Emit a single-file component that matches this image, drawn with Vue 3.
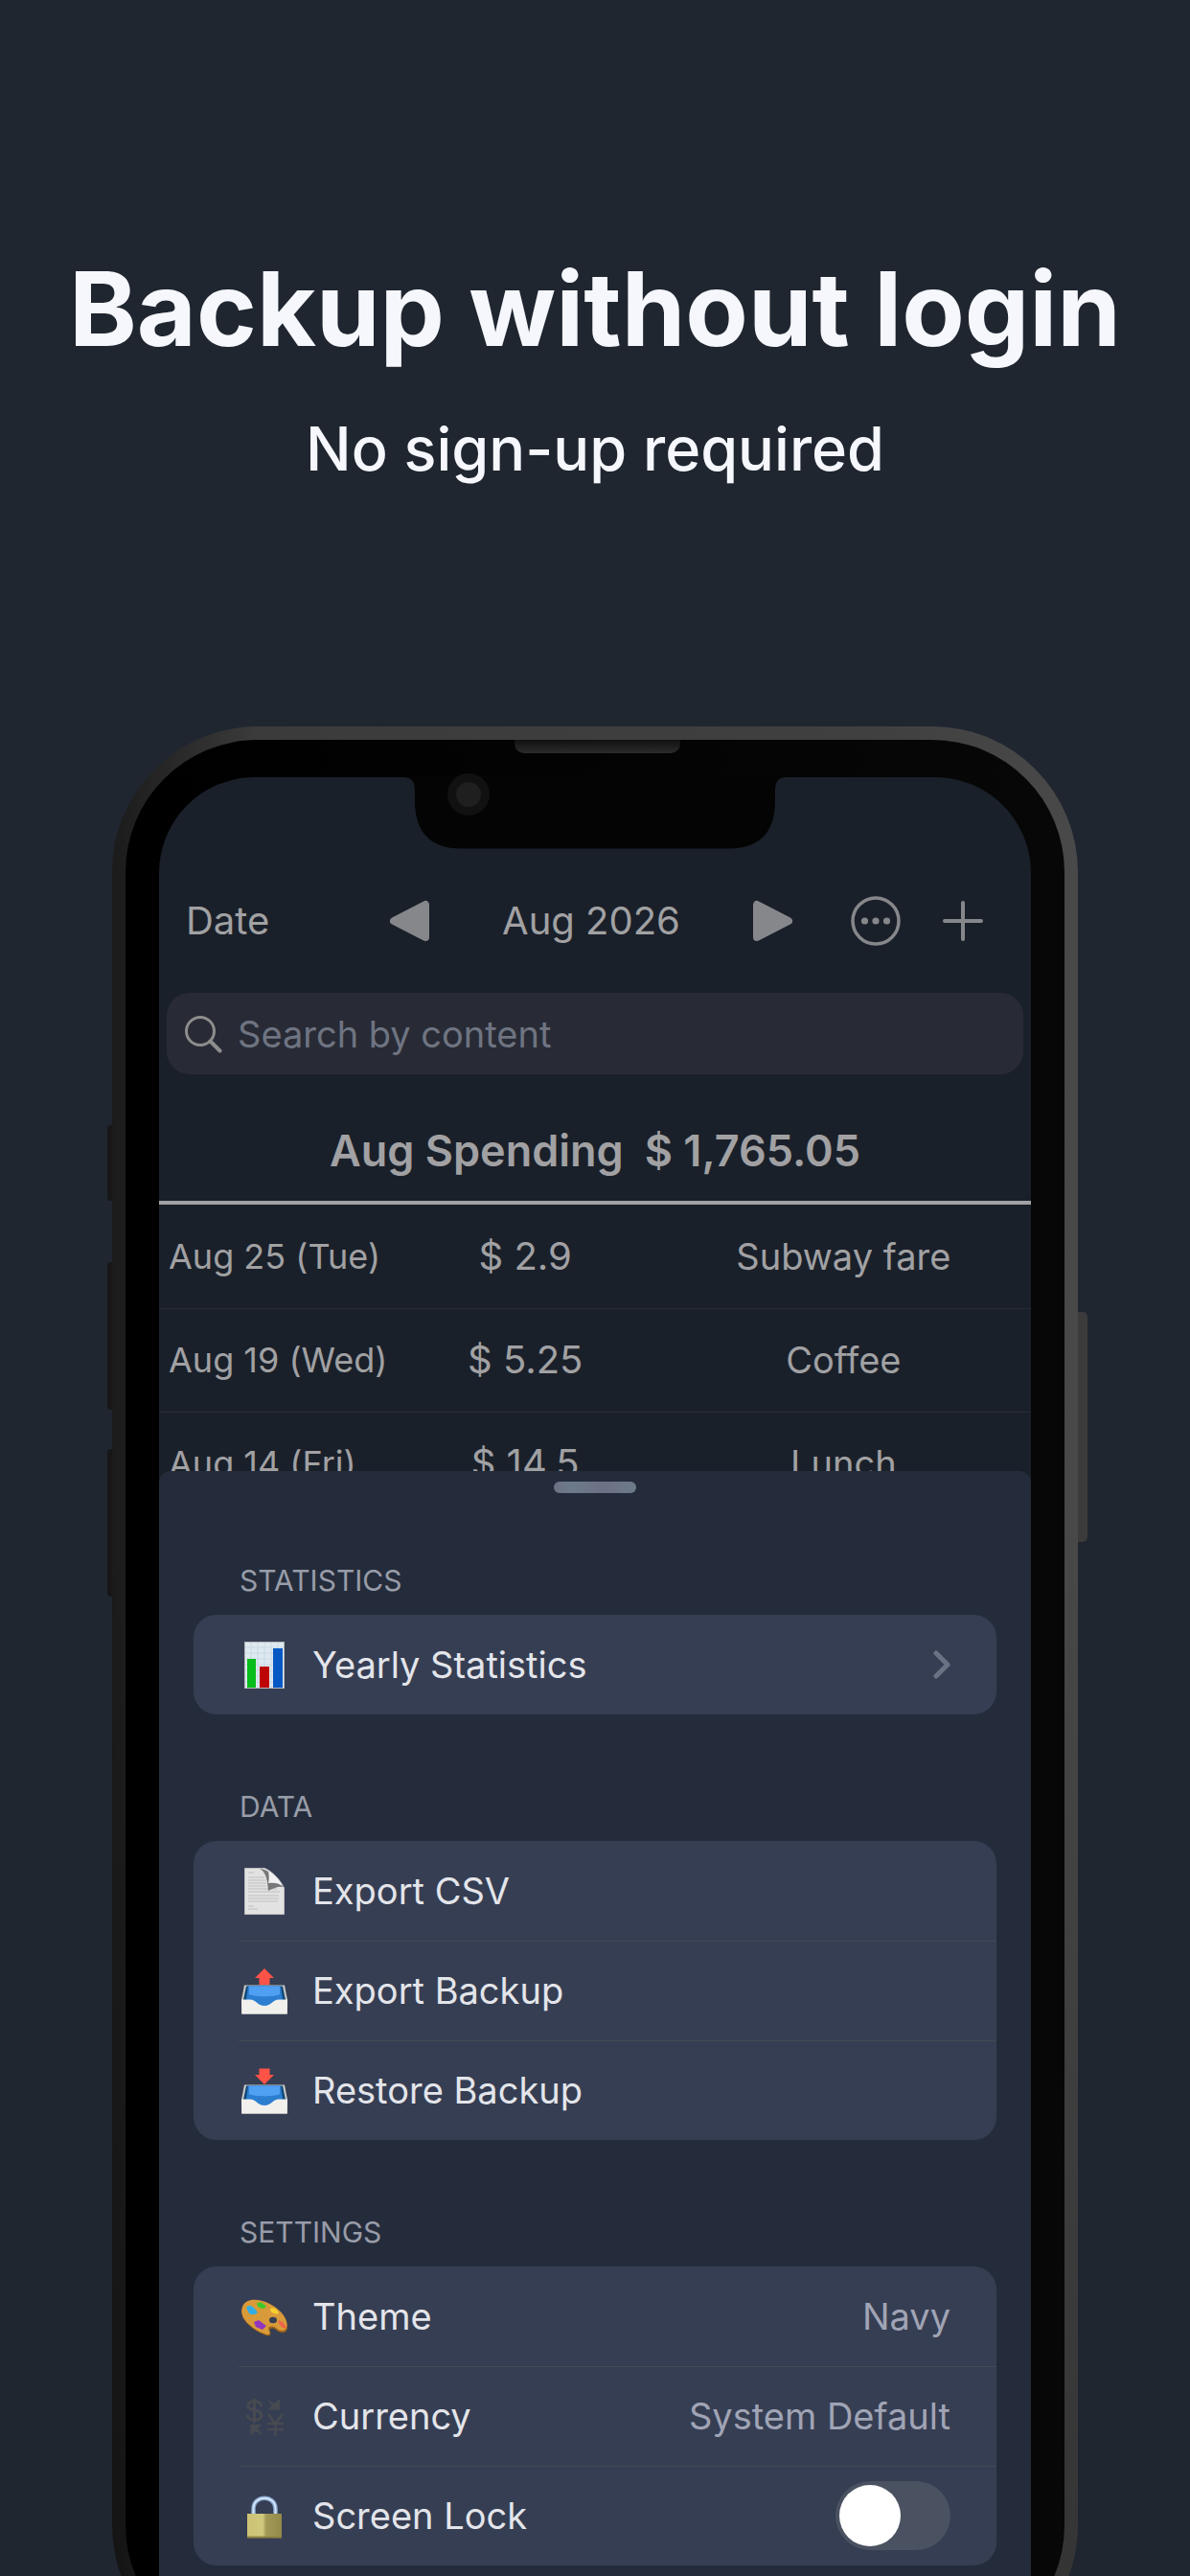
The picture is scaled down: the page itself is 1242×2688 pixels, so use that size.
<template>
  <main class="page">
    <header class="headline">
      <h1>Backup without login</h1>
      <p>No sign-up required</p>
    </header>

    <div class="phone">
      <span class="side-key mute"></span>
      <span class="side-key volume-up"></span>
      <span class="side-key volume-down"></span>
      <span class="side-key power"></span>

      <div class="bezel">
        <span class="speaker"></span>
        <svg class="notch" viewBox="0 0 400 76" aria-hidden="true">
          <path d="M0 0H400V1C391 1 388 6 388 16V26C388 58 372 75.500 340 75.500H60C28 75.500 12 58 12 26V16C12 6 9 1 0 1Z" fill="#040404" />
        </svg>
        <span class="camera"></span>

        <div class="screen">
          <div class="toolbar">
            <button class="date-button">Date</button>
            <div class="month-picker">
              <button aria-label="Previous month" @click="changeMonth(-1)">
                <svg width="44" height="44" viewBox="0 0 44 44">
                  <path d="M39 5V39L6 22Z" fill="#86878a" stroke="#86878a" stroke-width="8" stroke-linejoin="round" />
                </svg>
              </button>
              <span class="month">{{ monthLabel }}</span>
              <button aria-label="Next month" @click="changeMonth(1)">
                <svg width="44" height="44" viewBox="0 0 44 44">
                  <path d="M5 5V39L38 22Z" fill="#86878a" stroke="#86878a" stroke-width="8" stroke-linejoin="round" />
                </svg>
              </button>
            </div>
            <div class="actions">
              <button aria-label="More">
                <svg width="52" height="52" viewBox="0 0 52 52">
                  <circle cx="26" cy="26" r="24" fill="none" stroke="#86878a" stroke-width="3.500" />
                  <circle v-for="x in [14.5, 26, 37.5]" :key="x" :cx="x" cy="26" r="3.600" fill="#86878a" />
                </svg>
              </button>
              <button aria-label="Add">
                <svg width="42" height="42" viewBox="0 0 42 42">
                  <path d="M21 2V40M2 21H40" stroke="#86878a" stroke-width="4" stroke-linecap="round" />
                </svg>
              </button>
            </div>
          </div>

          <label class="search">
            <svg width="40" height="40" viewBox="0 0 40 40" aria-hidden="true">
              <circle cx="17" cy="17" r="14.500" fill="none" stroke="#8d8d8d" stroke-width="3" />
              <path d="M27.500 27.500L37.500 37.500" stroke="#8d8d8d" stroke-width="4" stroke-linecap="round" />
            </svg>
            <input v-model="query" type="text" placeholder="Search by content" aria-label="Search by content" />
          </label>

          <h2 class="total"><span>Aug Spending</span><span>$ 1,765.05</span></h2>

          <table class="expenses">
            <tbody>
              <tr v-for="item in filteredExpenses" :key="item.date">
                <td class="date">{{ item.date }}</td>
                <td class="amount">$ {{ item.amount }}</td>
                <td class="content">{{ item.content }}</td>
              </tr>
            </tbody>
          </table>

          <!-- Settings sheet -->
          <section class="sheet">
            <span class="handle"></span>

            <div v-for="group in groups" :key="group.title" class="group">
              <h3>{{ group.title }}</h3>
              <ul class="card">
                <li v-for="row in group.rows" :key="row.label">
                  <component :is="row.toggle ? 'label' : 'button'" class="row">
                    <svg class="row-icon" width="50" height="52" viewBox="0 0 50 52" aria-hidden="true">
                      <g v-if="row.icon === 'chart'">
                        <rect x="4.500" y="2.500" width="41" height="48" fill="#dfe9f0" stroke="#b4b6b8" />
                        <path d="M5 8H45M5 14H45M5 20H45M5 26H45M5 32H45M5 38H45M5 44H45M11 3V50M18 3V50M25 3V50M32 3V50M39 3V50" stroke="#c8dae6" stroke-width="1" />
                        <rect x="7" y="20" width="9" height="30" fill="#08bd1c" />
                        <rect x="20" y="28" width="10" height="22" fill="#bd0505" />
                        <rect x="34" y="9" width="10" height="41" fill="#0758c4" />
                      </g>
                      <g v-else-if="row.icon === 'page'" transform="translate(0 1)">
                        <path d="M4.500 1.500H25C31 3 42 14 45.500 22V49.500H4.500Z" fill="#e2e2e2" stroke="#bdbdbd" />
                        <path d="M8 6H14M8 11H25M8 14H26M8 17H27M8 20H27M8 23H38M8 26H41M8 30H40M8 33H40M8 36H39M8 41H14M8 44H18" stroke="#bfbfbf" stroke-width="1" />
                        <path d="M20 2C26 5 28 12 29 25C35 22 40 20 45 21C42 14 31 3 20 2Z" fill="#77787a" />
                        <path d="M29 4C30 10 30 14 29 17C35 16 40 17 44 20C42 14 34 7 29 4Z" fill="#f1f1f1" />
                      </g>
                      <g v-else-if="row.icon === 'outbox' || row.icon === 'inbox'" transform="translate(0 3)">
                        <path v-if="row.icon === 'outbox'" d="M25 0L35 10H30.500V17H19.500V10H15Z" fill="#ff5347" />
                        <path v-else d="M19.500 0.500H30.500V7H35L25 17L15 7H19.500Z" fill="#ff5347" />
                        <path d="M4 17.500H46L49 33V47.500H1V33Z" fill="#c9c9c5" />
                        <path d="M6 18.500H44L47 33H3Z" fill="#124878" />
                        <path d="M8 18.500H42L44 32C38 42 12 42 6 32Z" fill="#2c7fd0" />
                        <path d="M9 18.500H41V27C36 30 14 30 9 27Z" fill="#4f9ff3" />
                        <path d="M1 32.500H10C16 32.500 18 39 25 39S34 32.500 40 32.500H49L48.500 47.500H1.500Z" fill="#f1f0ed" />
                      </g>
                      <g v-else-if="row.icon === 'palette'" transform="translate(0 3)">
                        <path d="M1.500 16C3 7 13 5 23 8C37 12 49 24 49 34C49 42 41 41 37 37C33 34 29 36 31 39C32 42 31 44 27 43C14 39 -1 27 1.500 16Z" fill="#9c641b" />
                        <path d="M1.500 15C3 6 13 4 23 7C37 11 49 23 48.500 32C48 40 41 39 37 35C32 32 27 34 30 38C31 41 30 42 27 42C14 38 -1 26 1.500 15Z" fill="#d99a39" />
                        <path d="M6 14Q9 10 14 14L18 19Q14 23 9 20Z" fill="#33aee5" />
                        <path d="M17 9Q23 7 27 13Q24 17 18 13Z" fill="#3fc92b" />
                        <path d="M32 14Q38 14 40 20Q35 22 31 17Z" fill="#f8cf2f" />
                        <path d="M39 27Q46 29 48 35Q42 37 39 27Z" fill="#f0644d" />
                        <path d="M14 29L19 27L27 33L23 37L16 34Z" fill="#9135bf" />
                        <ellipse cx="34" cy="27" rx="4" ry="3.300" fill="#363e53" />
                      </g>
                      <g v-else-if="row.icon === 'exchange'" fill="none" stroke="#474a50" stroke-width="3">
                        <path d="M22 16C21 9 8 9 8 15.500C8 21.500 22 18.500 22 25C22 32 8 32 7 25M14.500 8V33" />
                        <path d="M29 24L36.500 34L44 24M36.500 34V47M28 34H45M28 40H45" stroke-width="2.500" />
                        <path d="M41 8V19.500H28.500L33 15.500L28 9L35 13Z" fill="#474a50" stroke="none" />
                        <path d="M10.500 35H22L18 39L23.500 46.500L15.500 42L10.500 47Z" fill="#474a50" stroke="none" />
                      </g>
                      <g v-else-if="row.icon === 'lock'" transform="translate(0 4)">
                        <defs>
                          <linearGradient id="brass">
                            <stop offset="0" stop-color="#cdc275" />
                            <stop offset="0.450" stop-color="#d0c87c" />
                            <stop offset="0.550" stop-color="#a29a58" />
                            <stop offset="1" stop-color="#94894a" />
                          </linearGradient>
                        </defs>
                        <path d="M13.500 22V15C13.500 0 36.500 0 36.500 15V22" fill="none" stroke="#86a6cf" stroke-width="4.500" />
                        <path d="M13.500 22V15C13.500 0 36.500 0 36.500 15V22" fill="none" stroke="#d3e3f6" stroke-width="2" />
                        <rect x="7" y="20" width="36" height="25" fill="url(#brass)" />
                        <path d="M7 44.500H43" stroke="#8e8342" stroke-width="2" />
                      </g>
                    </svg>
                    <span class="row-label">{{ row.label }}</span>
                    <svg v-if="row.chevron" class="chevron" width="18" height="30" viewBox="0 0 18 30" aria-hidden="true">
                      <path d="M3 3L15 15L3 27" fill="none" stroke="#6b7284" stroke-width="5" stroke-linecap="round" stroke-linejoin="round" />
                    </svg>
                    <span v-if="row.value" class="row-value">{{ row.value }}</span>
                    <input v-if="row.toggle" v-model="screenLock" type="checkbox" class="switch" />
                  </component>
                </li>
              </ul>
            </div>
          </section>
        </div>
      </div>
    </div>
  </main>
</template>

<script setup>
import { ref, computed } from 'vue';

const query = ref('');
const screenLock = ref(false);
const month = ref(new Date(2026, 7, 1));

const expenses = [
  { date: 'Aug 25 (Tue)', amount: '2.9', content: 'Subway fare' },
  { date: 'Aug 19 (Wed)', amount: '5.25', content: 'Coffee' },
  { date: 'Aug 14 (Fri)', amount: '14.5', content: 'Lunch' }
];

const groups = [
  {
    title: 'STATISTICS',
    rows: [{ icon: 'chart', label: 'Yearly Statistics', chevron: true }]
  },
  {
    title: 'DATA',
    rows: [
      { icon: 'page', label: 'Export CSV' },
      { icon: 'outbox', label: 'Export Backup' },
      { icon: 'inbox', label: 'Restore Backup' }
    ]
  },
  {
    title: 'SETTINGS',
    rows: [
      { icon: 'palette', label: 'Theme', value: 'Navy' },
      { icon: 'exchange', label: 'Currency', value: 'System Default' },
      { icon: 'lock', label: 'Screen Lock', toggle: true }
    ]
  }
];

const monthLabel = computed(() =>
  month.value.toLocaleDateString('en-US', { month: 'short', year: 'numeric' })
);

const filteredExpenses = computed(() =>
  expenses.filter(item => item.content.toLowerCase().includes(query.value.toLowerCase()))
);

const changeMonth = (step) => {
  month.value = new Date(month.value.getFullYear(), month.value.getMonth() + step, 1);
};
</script>

<style>
body {
  background: #1f2630;
}
</style>

<style scoped>
.page {
  display: flex;
  flex-direction: column;
  align-items: center;
  height: 100vh;
  overflow: hidden;
  background: #1f2630;
  font-family: Inter, "Liberation Sans", sans-serif;
}
.page * {
  box-sizing: border-box;
}
button,
input {
  margin: 0;
  padding: 0;
  border: 0;
  background: none;
  font: inherit;
  color: inherit;
}
button {
  cursor: pointer;
}
button svg {
  display: block;
}

/* Headline */
.headline {
  flex: none;
  padding: 256px 24px 250px;
  color: #f6f7fc;
  text-align: center;
}
.headline h1 {
  margin: 0;
  font-size: 107px;
  line-height: 132px;
  font-weight: 700;
}
.headline p {
  margin: 40px 0 0;
  font-size: 63px;
  line-height: 80px;
  font-weight: 500;
}

/* Phone */
.phone {
  position: relative;
  flex: none;
  width: calc(100% - 234px);
  padding: 14px;
  border-radius: 152px;
  background:
    linear-gradient(rgba(0, 0, 0, 0) 40%, rgba(0, 0, 0, 0.3)),
    linear-gradient(90deg, #1b1b1b, #3b3b3c 15%, #404041 80%, #49494a);
}
.side-key {
  position: absolute;
  left: -5px;
  width: 5px;
  border-radius: 4px 0 0 4px;
  background: #171717;
}
.mute {
  top: 416px;
  height: 79px;
}
.volume-up {
  top: 559px;
  height: 154px;
}
.volume-down {
  top: 754px;
  height: 154px;
}
.power {
  top: 611px;
  left: auto;
  right: -10px;
  width: 10px;
  height: 240px;
  border-radius: 0 5px 5px 0;
  background: #3c3b3b;
}
.bezel {
  position: relative;
  padding: 39px 35px 48px;
  border-radius: 138px;
  background: linear-gradient(90deg, #000, #070707);
}
.speaker {
  position: absolute;
  top: 0;
  left: calc(50% - 84px);
  width: 173px;
  height: 14px;
  border-radius: 0 0 10px 10px;
  background: linear-gradient(#111, #2b2b2b);
}
.notch {
  position: absolute;
  z-index: 1;
  top: 38px;
  left: calc(50% - 200px);
  width: 400px;
  height: 76px;
}
.camera {
  position: absolute;
  z-index: 2;
  top: 35px;
  left: calc(50% - 154px);
  width: 44px;
  height: 44px;
  border: 9px solid #111;
  border-radius: 50%;
  background: #1f1f1f;
}
.screen {
  overflow: hidden;
  border-radius: 100px 100px 40px 40px;
  background: #1a202a;
  color: #a1a1a3;
}

/* Toolbar */
.toolbar {
  display: grid;
  grid-template-columns: 1fr auto 1fr;
  align-items: center;
  height: 225px;
  padding: 74px 36px 0 28px;
  font-size: 40px;
  line-height: 48px;
}
.date-button {
  justify-self: start;
}
.month-picker {
  display: flex;
  align-items: center;
  gap: 75px;
}
.actions {
  display: flex;
  align-items: center;
  justify-self: end;
  gap: 44px;
  margin-right: 14px;
}
.search {
  display: flex;
  align-items: center;
  gap: 16px;
  height: 85px;
  margin: 0 8px;
  padding: 0 18px;
  border-radius: 24px;
  background: #282b35;
}
.search input {
  flex: 1;
  min-width: 0;
  outline: none;
  font-size: 38px;
  line-height: 48px;
}
.search input::placeholder {
  color: #6f7482;
  opacity: 1;
}
.total {
  display: flex;
  align-items: center;
  justify-content: center;
  gap: 22px;
  height: 136px;
  margin: 0;
  padding-top: 28px;
  border-bottom: 4px solid #a1a1a3;
  font-size: 45px;
  line-height: 56px;
  font-weight: 600;
}
.expenses {
  width: 100%;
  table-layout: fixed;
  border-collapse: collapse;
  font-size: 38px;
  line-height: 48px;
}
.expenses td {
  height: 108px;
  padding: 0;
  border-bottom: 1px solid #282c36;
  text-align: center;
}
.expenses .date {
  width: 27%;
  padding-left: 10px;
  font-size: 36px;
  text-align: left;
  white-space: nowrap;
}
.expenses .amount {
  width: 30%;
  font-size: 40px;
}

/* Sheet */
.sheet {
  position: relative;
  margin-top: -47px;
  padding: 11px 36px 48px;
  border-radius: 12px 12px 0 0;
  background: #242c3b;
}
.handle {
  display: block;
  width: 86px;
  height: 12px;
  margin: 0 auto;
  border-radius: 6px;
  background: linear-gradient(90deg, #6c7184, #6c7a8a 20%, #6c7184 60%, #6c7a8a);
}
.group {
  padding-top: 74px;
}
.handle + .group {
  padding-top: 69px;
}
.group h3 {
  margin: 0;
  padding: 0 48px 14px;
  color: #989ca8;
  font-size: 30px;
  line-height: 44px;
  font-weight: 400;
}
.card {
  margin: 0;
  padding: 0;
  overflow: hidden;
  border-radius: 24px;
  background: #363e53;
  list-style: none;
}
.card li {
  padding-left: 47px;
}
.row {
  display: flex;
  align-items: center;
  width: 100%;
  height: 104px;
  padding-right: 48px;
  color: #e3e5ea;
  font-size: 38px;
  line-height: 48px;
  text-align: left;
}
.card li + li .row {
  border-top: 1px solid #444953;
}
.row-icon {
  flex: none;
  margin: 0 25px 0 2px;
}
.row-label {
  flex: 1;
}
.row-value {
  color: #a0a4b5;
}
.switch {
  width: 120px;
  height: 72px;
  padding: 4px;
  appearance: none;
  border-radius: 36px;
  background: #4a5160;
  cursor: pointer;
}
.switch::before {
  content: "";
  display: block;
  width: 64px;
  height: 64px;
  border-radius: 50%;
  background: #fff;
}
.switch:checked {
  background: #34c759;
}
.switch:checked::before {
  margin-left: auto;
}
</style>
